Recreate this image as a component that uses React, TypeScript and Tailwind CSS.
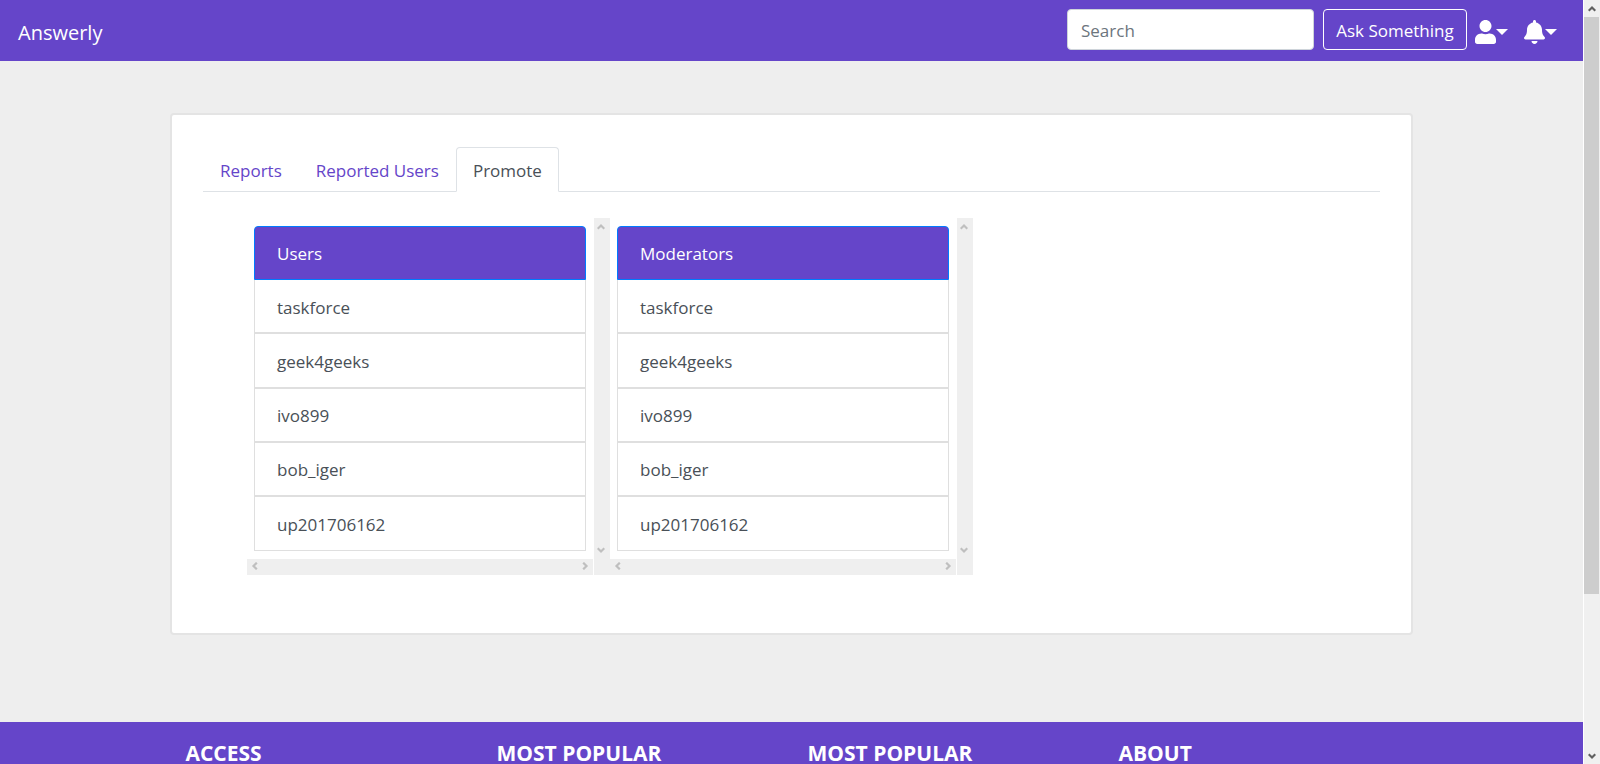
import { FaBell, FaUser } from "react-icons/fa";

const names = ["taskforce", "geek4geeks", "ivo899", "bob_iger", "up201706162"];
const footerHeadings = ["Access", "Most popular", "Most popular", "About"];
const tabs = ["Reports", "Reported Users", "Promote"];

const chevrons = {
  up: "M.7 5.8 4 2.5 7.3 5.8",
  down: "M.7 2.2 4 5.5 7.3 2.2",
  left: "M5.8.7 2.5 4 5.8 7.3",
  right: "M2.2.7 5.5 4 2.2 7.3",
};

function Chevron({ direction }: { direction: keyof typeof chevrons }) {
  return (
    <svg viewBox="0 0 8 8" className="size-2 shrink-0" fill="none" stroke="currentColor" strokeWidth="2.2" aria-hidden="true">
      <path d={chevrons[direction]} />
    </svg>
  );
}

function Caret() {
  return (
    <svg viewBox="0 0 12 6" className="h-1.5 w-3" fill="currentColor" aria-hidden="true">
      <path d="M0 0h12L6 6z" />
    </svg>
  );
}

function UserList({ title }: { title: string }) {
  return (
    <section aria-label={title} className="grid w-[363px] grid-cols-[1fr_16px] grid-rows-[1fr_16px] gap-x-px text-[#bfbfbf]">
      <ul className="grid h-[341px] auto-rows-fr px-[7px] py-2 text-[#495057]">
        <li className="flex items-center rounded-t border border-[#007bff] bg-[#6545c9] px-[22px] pt-0.5 text-white">{title}</li>
        {names.map((name) => (
          <li key={name} className="border-x border-b-2 border-[#dfdfdf] last:border-b">
            <a href="#" className="flex h-full items-center px-[22px] pt-[3px]">{name}</a>
          </li>
        ))}
      </ul>
      <div className="flex flex-col items-center justify-between bg-[#efefef] py-[5px] pr-0.5">
        <Chevron direction="up" />
        <Chevron direction="down" />
      </div>
      <div className="flex items-center justify-between bg-[#efefef] px-1 pb-0.5">
        <Chevron direction="left" />
        <Chevron direction="right" />
      </div>
      <div className="bg-[#efefef]" />
    </section>
  );
}

export default function App() {
  return (
    <div className="flex h-screen overflow-hidden bg-[#eeeeee] font-['Open_Sans','Noto_Sans',sans-serif] text-[17px] leading-[26px] text-[#495057]">
      <div className="flex min-w-0 flex-1 flex-col overflow-hidden">
        <header className="flex h-[61px] shrink-0 items-center justify-between bg-[#6545c9] pr-[26px] pb-0.5 pl-[18px] text-white">
          <a href="#" className="pt-1.5 text-xl">Answerly</a>
          <form className="flex items-center gap-2" onSubmit={(event) => event.preventDefault()}>
            <input
              type="search"
              aria-label="Search"
              placeholder="Search"
              className="mr-px h-[41px] w-[247px] rounded border border-[#ced4da] bg-white px-[13px] pt-0.5 text-[#495057] placeholder:text-[#6c757d]"
            />
            <button type="submit" className="h-[41px] w-36 rounded border border-white pt-0.5 whitespace-nowrap">Ask Something</button>
            <button type="button" aria-label="Account" className="flex items-center pt-1">
              <FaUser className="h-6 w-[21px]" />
              <Caret />
            </button>
            <button type="button" aria-label="Notifications" className="ml-2 flex items-center pt-1">
              <FaBell className="h-6 w-[21px]" />
              <Caret />
            </button>
          </form>
        </header>

        <main className="px-6 pt-[52px] pb-[87px]">
          <div className="mx-auto min-h-[522px] max-w-[1243px] rounded border-2 border-[#e4e4e4] bg-white px-[31px] pt-8">
            <nav className="flex border-b border-[#dee2e6]">
              {tabs.map((tab) => (
                <a
                  key={tab}
                  href="#"
                  aria-current={tab === "Promote" ? "page" : undefined}
                  className="-mb-px h-[45px] rounded-t border border-transparent px-4 pt-[10px] text-[#6545c9] aria-[current=page]:border-[#dee2e6] aria-[current=page]:border-b-white aria-[current=page]:bg-white aria-[current=page]:text-[#495057]"
                >
                  {tab}
                </a>
              ))}
            </nav>
            <div className="flex px-11 pt-[26px]">
              <UserList title="Users" />
              <UserList title="Moderators" />
            </div>
          </div>
        </main>

        <footer className="shrink-0 grow bg-[#6545c9] px-6 pt-[18px] text-white">
          <div className="mx-auto grid max-w-[1244px] grid-cols-4">
            {footerHeadings.map((heading, index) => (
              <h2 key={index} className="px-4 text-[21px] leading-[26px] font-bold uppercase">{heading}</h2>
            ))}
          </div>
        </footer>
      </div>

      <div className="flex w-[17px] flex-col border-l border-white bg-[#f0f0f0] text-[#606060]">
        <div className="flex h-[17px] items-center justify-center">
          <Chevron direction="up" />
        </div>
        <div className="mr-px flex-1">
          <div className="h-[79%] bg-[#cdcdcd]" />
        </div>
        <div className="flex h-[17px] items-center justify-center">
          <Chevron direction="down" />
        </div>
      </div>
    </div>
  );
}
